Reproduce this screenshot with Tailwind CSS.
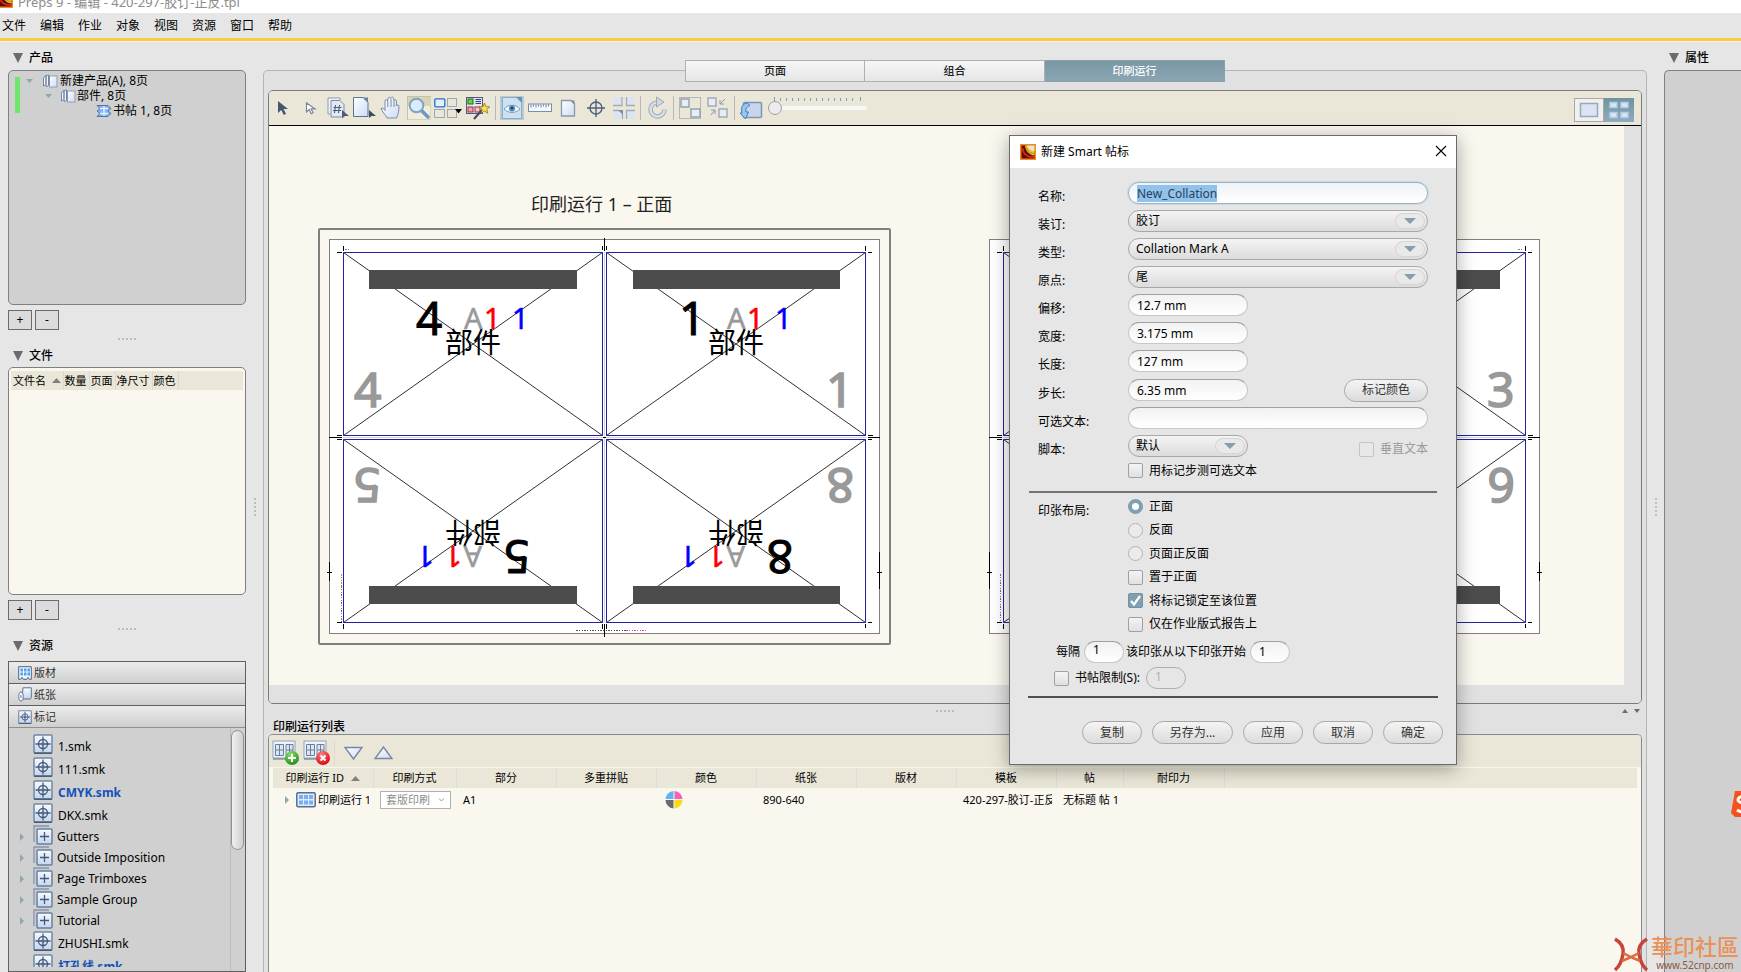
<!DOCTYPE html>
<html lang="zh-CN">
<head>
<meta charset="utf-8">
<title>Preps 9 - 编辑 - 420-297-胶订-正反.tpl</title>
<script src="https://cdn.jsdelivr.net/npm/@tailwindcss/browser@4"></script>
</head>
<body class="h-screen flex flex-col overflow-hidden bg-[#e6e6e6] text-black text-xs leading-4 font-['Noto_Sans','Noto_Sans_CJK_SC',sans-serif]">

<!-- shared gradients and symbols -->
<svg class="absolute w-0 h-0" aria-hidden="true">
  <defs>
    <linearGradient id="blue" x1="0" y1="0" x2="0" y2="1"><stop offset="0" stop-color="#f6faff"/><stop offset="1" stop-color="#c3d6ee"/></linearGradient>
    <linearGradient id="pale" x1="0" y1="0" x2="1" y2="1"><stop offset="0" stop-color="#ffffff"/><stop offset="1" stop-color="#cddcf5"/></linearGradient>
    <radialGradient id="green" cx=".4" cy=".25" r=".8"><stop offset="0" stop-color="#8be06a"/><stop offset="1" stop-color="#1f8a12"/></radialGradient>
    <radialGradient id="red" cx=".4" cy=".25" r=".8"><stop offset="0" stop-color="#ff8080"/><stop offset="1" stop-color="#d4000c"/></radialGradient>
    <symbol id="logo" viewBox="0 0 16 16">
      <rect x=".75" y=".75" width="14.5" height="14.5" fill="#5c0b08" stroke="#f58a1f" stroke-width="1.5"/>
      <path d="M5 1.500h9.500v10C9 11 5.500 7 5 1.500z" fill="#f0c93a"/><path d="M7 1.500h7.500v5.500C11.500 7 8.500 4.500 7 1.500z" fill="#e8e4d8"/>
      <path d="M2.500 4c.5 6 5 9.500 12 9" fill="none" stroke="#d22a14" stroke-width="2"/><path d="M6 3c1 4 4 6.500 8.500 6.500" fill="none" stroke="#c98f14" stroke-width="1.200"/>
    </symbol>
    <symbol id="smk" viewBox="0 0 20 20">
      <rect x="1" y="1" width="18" height="18" rx="1" fill="url(#blue)" stroke="#7286a3" stroke-width="1.500"/>
      <path d="M1 19.200h18" stroke="#4a5a72" stroke-width="1.500"/>
      <g fill="none" stroke="#465a78" stroke-width="1.300"><circle cx="10" cy="10" r="4.500"/><path d="M10 2.500v15M2.500 10h15"/></g><circle cx="10" cy="10" r="1.800" fill="#5a6e8c"/>
    </symbol>
    <symbol id="grp" viewBox="0 0 20 20">
      <path d="M1 17V1h15" fill="none" stroke="#8594ab" stroke-width="1.300"/><path d="M2 17V2h15v2H4v13z" fill="#c4ccd8"/>
      <rect x="4" y="4" width="15" height="15" rx="1" fill="url(#blue)" stroke="#6c7f9b" stroke-width="1.500"/>
      <path d="M11.500 7v9M7 11.500h9" stroke="#465a78" stroke-width="1.300"/>
    </symbol>
    <symbol id="down" viewBox="0 0 10 10"><path d="M0 0h10L5 10z" fill="#6b6b6b"/></symbol>
    <symbol id="grid" viewBox="0 0 20 16">
      <rect x=".75" y=".75" width="18.500" height="14" rx="1.500" fill="#dfeafc" stroke="#56708f" stroke-width="1.500"/>
      <g fill="#79aef5"><path d="M3 3h4v4H3zM8 3h4v4H8zM13 3h4v4h-4zM3 8.500h4v4H3zM8 8.500h4v4H8zM13 8.500h4v4h-4z"/></g>
    </symbol>
    <symbol id="book" viewBox="0 0 15 14">
      <rect x="7" y="2" width="7.500" height="11" fill="url(#pale)" stroke="#8fa0b8"/>
      <path d="M1 12V4l2.500-3v9.500zM3.500 10.500V2L6 .8V11L4 13z" fill="#f2f7ff" stroke="#7388a5"/><path d="M6.500 2v10" stroke="#6c85a8"/>
    </symbol>
    <symbol id="plates" viewBox="0 0 28 26">
      <rect x="1" y="1" width="22" height="17" fill="#eef3fb" stroke="#8fa3b8"/><path d="M1 19h22" stroke="#5b6d84"/>
      <g fill="#dce7f6" stroke="#6b7f99"><path d="M3.500 4.500h8v11h-8zM14 4.500h7v11h-7zM7.500 4.500v11M17.500 4.500v11M3.500 10h8M14 10h7"/></g>
    </symbol>
    <!-- sheet side: four page cells with crop marks -->
    <g id="sheet">
      <rect x="329.500" y="239.500" width="550" height="394" fill="#fff" stroke="#808080"/>
      <path d="M604.500 252v371M343 437.500h523" stroke="#d4d4e8"/>
      <g stroke="#303030" stroke-width="1" fill="none">
        <path d="M343.500 252.500l259 183M602.500 252.500l-259 183M606.500 252.500l259 183M865.500 252.500l-259 183M343.500 439.500l259 183M602.500 439.500l-259 183M606.500 439.500l259 183M865.500 439.500l-259 183"/>
      </g>
      <g fill="none" stroke="#2222a0"><path d="M343.500 252.500h259v183h-259zM606.500 252.500h259v183h-259zM343.500 439.500h259v183h-259zM606.500 439.500h259v183h-259z"/></g>
      <g fill="#4c4c4c"><path d="M369 270h208v19H369zM633 270h207v19H633zM369 586h208v18H369zM633 586h207v18H633z"/></g>
      <g stroke="#000"><path d="M343.500 246v5M337 252.500h5M865.500 246v5M868 252.500h4M604.500 238v13M602.500 246v4M606.500 246v4M329 437.500h13M337 435.500h5M337 439.500h5M868 437.500h12M868 435.500h5M868 439.500h4M343.500 624v5M337 622.500h5M865.500 624v4M868 622.500h4M604.500 624v13M602.500 624v5M606.500 624v5M603 437.500h3"/></g>
    </g>
    <g id="caption">
      <text x="464" y="329" font-size="29" fill="#999" stroke="#999" stroke-width=".5">A</text>
      <text x="484" y="329" font-size="29" fill="#f00" stroke="#f00" stroke-width=".5">1</text>
      <text x="512" y="329" font-size="29" fill="#00f" stroke="#00f" stroke-width=".5">1</text>
      <text x="445" y="353" font-size="28">部件</text>
    </g>
  </defs>
</svg>

<header class="shrink-0">
  <div class="flex h-[13px] overflow-hidden bg-white text-[13px] text-[#8c8c8c]">
    <svg class="-mt-2 w-4 h-4 -ml-[3px]"><use href="#logo"/></svg>
    <span class="ml-[5px] -mt-1.5">Preps 9 - 编辑 - 420-297-胶订-正反.tpl</span>
  </div>
  <nav class="flex h-[25px] items-center gap-3.5 px-0.5">
    <button>文件</button><button>编辑</button><button>作业</button><button>对象</button><button>视图</button><button>资源</button><button>窗口</button><button>帮助</button>
  </nav>
  <div class="h-1 border-b border-[#f4f4f4] bg-[#fccb40]"></div>
</header>

<div class="flex min-h-0 flex-1">

  <!-- left column -->
  <aside class="flex w-[246px] shrink-0 flex-col pl-2">
    <h2 class="flex h-7 items-center gap-1.5 pl-[5px] pt-1 font-medium"><svg class="h-2.5 w-2.5"><use href="#down"/></svg>产品</h2>
    <section class="h-[235px] rounded-[5px] border border-[#808080] bg-[#d0d0d0] p-1.5">
      <div class="flex">
        <div class="h-9 w-[5px] bg-[#6ee86a]"></div>
        <ul class="-mt-1 flex-1 leading-[15px]">
          <li class="flex items-center pl-1.5"><svg class="h-1 w-[7px]" viewBox="0 0 7 4"><path d="M0 0h7L3.500 4z" fill="#8aa9b5"/></svg><svg class="ml-[9px] h-3.5 w-4"><use href="#book"/></svg><span class="ml-0.5">新建产品(A), 8页</span></li>
          <li class="flex items-center pl-[25px]"><svg class="h-1 w-[7px]" viewBox="0 0 7 4"><path d="M0 0h7L3.500 4z" fill="#8aa9b5"/></svg><svg class="ml-2 h-3.5 w-4"><use href="#book"/></svg><span class="ml-px">部件, 8页</span></li>
          <li class="flex items-center pl-[76px]"><svg class="h-3.5 w-4" viewBox="0 0 16 14"><path d="M1 1.500h11l3 3-3 2.500 3 2.500-3 3H1l3-3L1 7l3-2.500z" fill="#7db5f5" stroke="#54749c"/><path d="M4 4.500h8M4 9.500h8M8 2v10" stroke="#eaf4ff" stroke-width="1.300"/></svg><span class="ml-px">书帖 1, 8页</span></li>
        </ul>
      </div>
    </section>
    <div class="mt-[5px] flex gap-[3px]">
      <button class="h-5 w-6 border border-[#6b6b6b] bg-[#dcdcdc] leading-4">+</button><button class="h-5 w-6 border border-[#6b6b6b] bg-[#dcdcdc] leading-4">-</button>
    </div>
    <div class="flex h-[13px] justify-center gap-0.5 pt-2"><i class="h-0.5 w-0.5 bg-[#bdbdbd]"></i><i class="h-0.5 w-0.5 bg-[#bdbdbd]"></i><i class="h-0.5 w-0.5 bg-[#bdbdbd]"></i><i class="h-0.5 w-0.5 bg-[#bdbdbd]"></i><i class="h-0.5 w-0.5 bg-[#bdbdbd]"></i></div>
    <h2 class="flex h-6 items-center gap-1.5 pl-[5px] pt-0.5 font-medium"><svg class="h-2.5 w-2.5"><use href="#down"/></svg>文件</h2>
    <section class="h-[228px] rounded-[5px] border border-[#808080] bg-[#faf7ef] px-0.5 pt-[3px]">
      <table class="w-full table-fixed bg-[#ebe7d8] text-[11px]">
        <colgroup><col class="w-[52px]"><col class="w-[26px]"><col class="w-[26px]"><col class="w-[37px]"><col class="w-[26px]"><col></colgroup>
        <thead><tr class="h-[19px] text-left whitespace-nowrap">
          <th class="border-r border-[#d8d8d8] pl-0.5 font-normal"><span class="flex items-center justify-between pr-0.5">文件名<svg class="h-[5px] w-[9px]" viewBox="0 0 9 5"><path d="M0 5h9L4.500 0z" fill="#808080"/></svg></span></th>
          <th class="border-r border-[#d8d8d8] pl-px font-normal">数量</th><th class="border-r border-[#d8d8d8] pl-px font-normal">页面</th><th class="border-r border-[#d8d8d8] pl-px font-normal">净尺寸</th><th class="border-r border-[#d8d8d8] pl-px font-normal">颜色</th><th></th>
        </tr></thead>
      </table>
    </section>
    <div class="mt-[5px] flex gap-[3px]">
      <button class="h-5 w-6 border border-[#6b6b6b] bg-[#dcdcdc] leading-4">+</button><button class="h-5 w-6 border border-[#6b6b6b] bg-[#dcdcdc] leading-4">-</button>
    </div>
    <div class="flex h-[13px] justify-center gap-0.5 pt-2"><i class="h-0.5 w-0.5 bg-[#bdbdbd]"></i><i class="h-0.5 w-0.5 bg-[#bdbdbd]"></i><i class="h-0.5 w-0.5 bg-[#bdbdbd]"></i><i class="h-0.5 w-0.5 bg-[#bdbdbd]"></i><i class="h-0.5 w-0.5 bg-[#bdbdbd]"></i></div>
    <h2 class="flex h-6 items-center gap-1.5 pl-[5px] pt-0.5 font-medium"><svg class="h-2.5 w-2.5"><use href="#down"/></svg>资源</h2>
    <section class="mt-1 flex min-h-0 flex-1 flex-col border border-[#606060] bg-[#d0d0d0] text-[11px]">
      <button class="flex h-[22px] shrink-0 items-center gap-0.5 border-b border-[#606060] bg-linear-to-b from-[#ececec] to-[#cfcfcf] pl-[9px] text-[#333]"><svg class="h-3.5 w-3.5" viewBox="0 0 14 14"><path d="M.7.7h12.600v12.600h-2l-1.300-2-1.300 2H5.300L4 11.300l-1.300 2h-2z" fill="#eef5ff" stroke="#4a6384"/><path d="M2.500 2.500h2.500v3H2.500zM6 2.500h2.500v3H6zM9.500 2.500H12v3H9.500zM2.500 6.500h2.500v3H2.500zM6 6.500h2.500v3H6zM9.500 6.500H12v3H9.500z" fill="#4fa0f0"/></svg>版材</button>
      <button class="flex h-[22px] shrink-0 items-center gap-0.5 border-b border-[#606060] bg-linear-to-b from-[#ececec] to-[#cfcfcf] pl-[9px] text-[#333]"><svg class="h-[15px] w-3.5" viewBox="0 0 14 15"><path d="M5 .8h8.300v9.500c0 1-.6 1.700-1.300 1.700H4z" fill="url(#blue)" stroke="#5e7390"/><ellipse cx="3" cy="9.500" rx="2.200" ry="4.500" fill="#fff" stroke="#5e7390"/><ellipse cx="3" cy="9.500" rx=".7" ry="1.800" fill="#8094b0"/></svg>纸张</button>
      <button class="flex h-[22px] shrink-0 items-center gap-0.5 border-b border-[#909090] bg-linear-to-b from-[#ececec] to-[#cfcfcf] pl-[9px] text-[#333]"><svg class="h-3.5 w-3.5"><use href="#smk"/></svg>标记</button>
      <div class="flex min-h-0 flex-1 text-xs">
        <ul class="mb-1 flex-1 overflow-hidden pt-1.5">
          <li class="flex h-[23px] items-start pl-6"><svg class="h-5 w-5"><use href="#smk"/></svg><span class="ml-[5px] pt-[5px]">1.smk</span></li>
          <li class="flex h-[23px] items-start pl-6"><svg class="h-5 w-5"><use href="#smk"/></svg><span class="ml-[5px] pt-[5px]">111.smk</span></li>
          <li class="flex h-[23px] items-start pl-6"><svg class="h-5 w-5"><use href="#smk"/></svg><span class="ml-[5px] pt-[5px] font-bold text-[#1450b8]">CMYK.smk</span></li>
          <li class="flex h-[23px] items-start pl-6"><svg class="h-5 w-5"><use href="#smk"/></svg><span class="ml-[5px] pt-[5px]">DKX.smk</span></li>
          <li class="flex h-[21px] items-center pl-[11px]"><svg class="mr-[9px] h-2 w-1" viewBox="0 0 4 8"><path d="M0 0v8l4-4z" fill="#8aa9b5"/></svg><svg class="h-5 w-5 -mt-1"><use href="#grp"/></svg><span class="ml-1">Gutters</span></li>
          <li class="flex h-[21px] items-center pl-[11px]"><svg class="mr-[9px] h-2 w-1" viewBox="0 0 4 8"><path d="M0 0v8l4-4z" fill="#8aa9b5"/></svg><svg class="h-5 w-5 -mt-1"><use href="#grp"/></svg><span class="ml-1">Outside Imposition</span></li>
          <li class="flex h-[21px] items-center pl-[11px]"><svg class="mr-[9px] h-2 w-1" viewBox="0 0 4 8"><path d="M0 0v8l4-4z" fill="#8aa9b5"/></svg><svg class="h-5 w-5 -mt-1"><use href="#grp"/></svg><span class="ml-1">Page Trimboxes</span></li>
          <li class="flex h-[21px] items-center pl-[11px]"><svg class="mr-[9px] h-2 w-1" viewBox="0 0 4 8"><path d="M0 0v8l4-4z" fill="#8aa9b5"/></svg><svg class="h-5 w-5 -mt-1"><use href="#grp"/></svg><span class="ml-1">Sample Group</span></li>
          <li class="flex h-[21px] items-center pl-[11px]"><svg class="mr-[9px] h-2 w-1" viewBox="0 0 4 8"><path d="M0 0v8l4-4z" fill="#8aa9b5"/></svg><svg class="h-5 w-5 -mt-1"><use href="#grp"/></svg><span class="ml-1">Tutorial</span></li>
          <li class="flex h-[23px] items-start pl-6"><svg class="h-5 w-5"><use href="#smk"/></svg><span class="ml-[5px] pt-[5px]">ZHUSHI.smk</span></li>
          <li class="flex h-[23px] items-start pl-6"><svg class="h-5 w-5"><use href="#smk"/></svg><span class="ml-[5px] pt-[5px] font-bold text-[#1450b8]">打孔线.smk</span></li>
        </ul>
        <div class="w-[15px] border-l border-[#bcbcbc] pt-0.5 pr-px"><div class="h-[120px] rounded-full border border-[#909090] bg-linear-to-r from-[#f0f0f0] to-[#d0d0d0]"></div></div>
      </div>
    </section>
  </aside>

  <!-- vertical splitter -->
  <div class="flex w-[17px] shrink-0 flex-col items-center justify-center gap-0.5"><i class="h-0.5 w-0.5 bg-[#bdbdbd]"></i><i class="h-0.5 w-0.5 bg-[#bdbdbd]"></i><i class="h-0.5 w-0.5 bg-[#bdbdbd]"></i><i class="h-0.5 w-0.5 bg-[#bdbdbd]"></i><i class="h-0.5 w-0.5 bg-[#bdbdbd]"></i></div>

  <!-- workspace -->
  <main class="mt-7 flex min-w-0 flex-1 flex-col rounded-t-[5px] border border-b-0 border-[#b5b5b5] bg-[#e1e1e1] px-1">
    <div class="-mt-[11px] flex h-[22px] shrink-0 justify-center text-[11px] font-medium">
      <button class="w-[180px] border border-[#b0b0b0] bg-linear-to-b from-[#f6f6f6] to-[#e6e6e6] text-[#222]">页面</button>
      <button class="w-[180px] border border-l-0 border-[#b0b0b0] bg-linear-to-b from-[#f6f6f6] to-[#e6e6e6] text-[#222]">组合</button>
      <button class="w-[180px] border border-l-0 border-[#8ba0ab] bg-linear-to-b from-[#7897a4] to-[#8ca5b3] text-white">印刷运行</button>
    </div>

    <section class="mt-2 shrink-0 overflow-hidden rounded-[5px] border border-[#7a7a7a]">
      <div class="flex h-[35px] items-center border-b border-black bg-[#ebe7d8]">
        <button class="grid w-7 place-items-center" aria-label="选择"><svg class="h-5 w-5" viewBox="0 0 20 20"><path d="M5 3v12l3.300-3 2.500 5 2.200-1.200-2.500-4.800H15z" fill="#46566e"/></svg></button>
        <button class="grid w-7 place-items-center" aria-label="直接选择"><svg class="h-5 w-5" viewBox="0 0 20 20"><path d="M5.500 5v9l2.700-2.400 2 4.200 1.900-1-2-4H14z" fill="#fff" stroke="#7a879a" stroke-width="1.200"/></svg></button>
        <button class="grid w-[26px] place-items-center" aria-label="页码"><svg class="h-6 w-6" viewBox="0 0 24 24"><path d="M4 18H2V2h12v2" fill="#eef3fb" stroke="#8b9ab0"/><path d="M5 4.500h9l4 4V21H5z" fill="#e2e9f4" stroke="#7c8ca4"/><path d="M9.500 9l-1 8M13.500 9l-1 8M7.500 11.500h8M7 14.500h8" stroke="#4d5f7a" stroke-width="1.100"/><path d="M16 14v8l2.500-2H23z" fill="#4e5c72"/></svg></button>
        <button class="grid w-[26px] place-items-center" aria-label="新建页面"><svg class="h-6 w-6" viewBox="0 0 24 24"><path d="M1.500 1.500H11l5 5V20.500H1.500z" fill="url(#pale)" stroke="#5b7290"/><path d="M11 1.500h5v5z" fill="#6b809b"/><path d="M17 14v8l2.500-2H24z" fill="#3f4d63"/></svg></button>
        <button class="grid w-7 place-items-center" aria-label="手形"><svg class="h-6 w-6" viewBox="0 0 24 24"><path d="M8 22c-1-3-5-6-6-9.500 1.500-1.200 3 .3 4 2V5c.2-1.800 2.400-1.800 2.600 0l.4-2.500c.2-1.700 2.400-1.700 2.600 0L12 2c.4-1.400 2.300-1.300 2.500.3L15 4.500c.4-1.400 2.300-1.200 2.400.3V10c.5-1.500 2.600-1.300 2.600.3 0 4-.8 8.700-2.500 11.700z" fill="url(#pale)" stroke="#7b8ca5"/><path d="M8.800 5v6M12 3v8M15 4.500V11" stroke="#7b8ca5"/></svg></button>
        <button class="grid w-7 place-items-center" aria-label="缩放"><svg class="h-6 w-6" viewBox="0 0 24 24"><path d="M0 0h24v24H0z" fill="#d8d4b8"/><path d="M1 10h22v13H1z" fill="#efedde"/><path d="M0 24V0h24" fill="none" stroke="#b5b090"/><path d="M14.500 14.500L21 21" stroke="#6f98c2" stroke-width="3.500" stroke-linecap="round"/><circle cx="9.500" cy="9.500" r="6.800" fill="#dcecfa" stroke="#7fa3c8" stroke-width="2"/></svg></button>
        <button class="grid w-[30px] place-items-center" aria-label="排列"><svg class="h-6 w-7" viewBox="0 0 28 24"><rect x=".8" y="2.800" width="10" height="8" rx="1" fill="#e3f0ff" stroke="#2a6fc4" stroke-width="1.300"/><g fill="none" stroke="#4d6a92" stroke-dasharray="1 1"><path d="M13.500 2.500h9v8h-9zM.5 13.500h10v8H.5zM13.500 13.500h9v8h-9z"/></g><path d="M21 13h7l-3.500 4.500z"/></svg></button>
        <button class="grid w-[30px] place-items-center" aria-label="标记向导"><svg class="h-6 w-6" viewBox="0 0 24 24"><rect x=".5" y="1.500" width="16" height="16" fill="#e4e6f0" stroke="#4e5a78"/><rect x="2" y="3" width="5" height="5" fill="#5fdc3a" stroke="#1f6a16"/><path d="M9.500 3.500H15M9.500 5.500H15M9.500 7.500H15" stroke="#27407a"/><rect x="2" y="11" width="5" height="5" fill="#f4a0a8" stroke="#9a3240"/><rect x="9" y="11" width="5" height="5" fill="#f4c8cc" stroke="#9a3240"/><path d="M8 23l8-9" stroke="#3e4a60" stroke-width="2"/><path d="M18.500 7l1.400 3.600 3.900.3-3 2.500 1 3.800-3.300-2.100-3.300 2.100 1-3.800-3-2.500 3.900-.3z" fill="#ffe14a" stroke="#8a7020" stroke-width=".8"/></svg></button>
        <i class="mx-0.5 h-6 w-px bg-[#b4b8bc]"></i>
        <button class="grid w-7 place-items-center" aria-label="预览"><svg class="h-6 w-6" viewBox="0 0 24 24"><path d="M0 0h24v24H0z" fill="#b4cad8"/><path d="M2.500 1.500H17l4.500 4.500v16.500h-19z" fill="#cfe0ee" stroke="#8aaec8"/><path d="M16 1h6v6z" fill="#6a94b5"/><path d="M4 13c4-5 12-5 16 0-4 4.500-12 4.500-16 0z" fill="#eef6fc" stroke="#6a9abf"/><circle cx="12" cy="12.500" r="3" fill="#5289b5"/><circle cx="12" cy="12" r="1.200" fill="#1c3e5a"/></svg></button>
        <button class="grid w-7 place-items-center" aria-label="标尺"><svg class="h-6 w-6" viewBox="0 0 24 24"><rect x=".5" y="8" width="23" height="7.500" fill="#f4f8ff" stroke="#7b8ca5"/><path d="M3 8.500v3M5.500 8.500v2M8 8.500v3M10.500 8.500v2M13 8.500v3M15.500 8.500v2M18 8.500v3M20.500 8.500v2" stroke="#6d7f99"/></svg></button>
        <button class="grid w-7 place-items-center" aria-label="页面"><svg class="h-6 w-6" viewBox="0 0 24 24"><path d="M5.500 4.500H15l3.500 3.500v12h-13z" fill="url(#pale)" stroke="#8a98ad" stroke-width="1.300"/><path d="M14.500 4.500h4v4z" fill="#7e8ca2"/></svg></button>
        <button class="grid w-7 place-items-center" aria-label="标记"><svg class="h-6 w-6" viewBox="0 0 24 24" fill="none" stroke="#4f6079" stroke-width="1.400"><circle cx="12" cy="12" r="6"/><path d="M12 3v18M3 12h18"/></svg></button>
        <button class="grid w-7 place-items-center" aria-label="裁切"><svg class="h-6 w-6" viewBox="0 0 24 24"><path d="M2 1h7v7H2zM15 1h7v7h-7zM2 15h4l4 4v4H2zM15 15h7v8h-7z" fill="#d9e4f5"/><path d="M1 9.500h9V1M14.500 1v8.500H23M1 14.500h6M10.500 18v5M14.500 23v-8.500H23" fill="none" stroke="#a0abbc" stroke-width="1.300"/><path d="M6 14h5v5z" fill="#7e8ca2"/></svg></button>
        <i class="mx-0.5 h-6 w-px bg-[#b4b8bc]"></i>
        <button class="grid w-7 place-items-center" aria-label="旋转"><svg class="h-6 w-6" viewBox="0 0 24 24"><path d="M12 6.500a7 7 0 1 0 7.500 7" fill="none" stroke="#9ea9b5" stroke-width="4.500"/><path d="M12 6.500a7 7 0 1 0 7.500 7" fill="none" stroke="#d9e0e6" stroke-width="2.500"/><path d="M11.500 1v10L19 6z" fill="#cdd8e2" stroke="#9ea9b5"/></svg></button>
        <i class="mx-0.5 h-6 w-px bg-[#b4b8bc]"></i>
        <button class="grid w-7 place-items-center" aria-label="编组"><svg class="h-6 w-6" viewBox="0 0 24 24"><path d="M1.500 1.500h21v21h-21z" fill="none" stroke="#7a8798" stroke-dasharray="1 1"/><path d="M3 3h8v8H3zM13 13h9v8h-9z" fill="#e6edf7" stroke="#96a1b0" stroke-width="1.500"/></svg></button>
        <button class="grid w-7 place-items-center" aria-label="取消编组"><svg class="h-6 w-6" viewBox="0 0 24 24"><path d="M2 2h8v8H2zM13 13h8v8h-8z" fill="#e6edf7" stroke="#a2abb8" stroke-width="1.500"/><path d="M14 4v4h4M14 8l5-5M5 14h4v4M9 14l-4 5" fill="none" stroke="#8e98a6"/></svg></button>
        <i class="mx-0.5 h-6 w-px bg-[#b4b8bc]"></i>
        <button class="grid w-7 place-items-center" aria-label="翻转"><svg class="h-6 w-6" viewBox="0 0 24 24"><rect x="4.500" y="6.500" width="18" height="15" rx="1" fill="#c7d6ec" stroke="#7f93b3" stroke-width="1.500"/><path d="M8 7C3 8 1.500 12 3 17H1l5.500 6 3-7H7c-.8-3 0-5 4-6.500z" fill="#9cc4f0" stroke="#3f7fc0"/></svg></button>
        <div class="grid w-[102px] self-start pt-1.5 pl-[3px]">
          <svg class="ml-[5px] h-1 w-[90px]" viewBox="0 0 90 4"><path d="M1.500 0v4M7.500 1v3M13.500 1v3M19.500 1v3M25.500 1v3M31.500 1v3M37.500 1v3M43.500 1v3M49.500 1v3M55.500 1v3M61.500 1v3M67.500 1v3M73.500 1v3M79.500 1v3M87.500 0v4" stroke="#7f9fae"/></svg>
          <input type="range" min="0" max="14" value="0" aria-label="缩放比例" class="h-3.5 w-full appearance-none bg-transparent [&::-webkit-slider-runnable-track]:h-1 [&::-webkit-slider-runnable-track]:rounded-full [&::-webkit-slider-runnable-track]:bg-[#f8f8f4] [&::-webkit-slider-thumb]:-mt-[5px] [&::-webkit-slider-thumb]:h-3.5 [&::-webkit-slider-thumb]:w-3.5 [&::-webkit-slider-thumb]:appearance-none [&::-webkit-slider-thumb]:rounded-full [&::-webkit-slider-thumb]:border [&::-webkit-slider-thumb]:border-[#a0a0a0] [&::-webkit-slider-thumb]:bg-[#ececec]">
        </div>
        <div class="mt-[3px] mr-[7px] ml-auto flex">
          <button class="grid h-6 w-[30px] place-items-center border border-[#a8a8a8] bg-[#f0f0ee]" aria-label="单页视图"><svg class="h-4 w-5" viewBox="0 0 20 16"><rect x="1.500" y="1.500" width="17" height="13" fill="#d9e4f5" stroke="#9aa8bc" stroke-width="1.500"/></svg></button>
          <button class="grid h-6 w-[30px] place-items-center bg-linear-to-b from-[#6f949f] to-[#8eabc0]" aria-label="多页视图"><svg class="h-[18px] w-[22px]" viewBox="0 0 22 18"><path d="M2 1.500h7v5H2zM13 1.500h7v5h-7zM2 11.500h7v5H2zM13 11.500h7v5h-7z" fill="#d9e6fa" stroke="#b5cbe0" stroke-width="1.500"/></svg></button>
        </div>
      </div>
      <div class="bg-[#e1e1e1] pr-[17px] pb-[18px]">
        <div class="overflow-hidden bg-[#faf7ef]">
          <svg class="h-[559px] w-[1355px] max-w-none" viewBox="269 126 1355 559">
            <text x="531" y="211" font-size="18" fill="#222" xml:space="preserve">印刷运行 1 – 正面</text>
            <rect x="319" y="229" width="571" height="415" fill="none" stroke="#808080" stroke-width="2" rx="1"/>
            <use href="#sheet"/>
            <use href="#sheet" x="660"/>
            <g font-size="46">
              <use href="#caption"/><use href="#caption" x="263"/>
              <use href="#caption" transform="rotate(180 473 437.500)"/><use href="#caption" transform="rotate(180 604.500 437.500)"/>
              <g stroke="#000" stroke-width="1">
                <text x="416" y="335">4</text><text x="679" y="335">1</text>
                <text x="416" y="335" transform="rotate(180 473 437.500)">5</text><text x="416" y="335" transform="rotate(180 604.500 437.500)">8</text>
              </g>
              <g fill="#999" font-size="48" stroke="#999" stroke-width="1.600">
                <text x="354" y="407">4</text><text x="826" y="407">1</text>
                <text x="355" y="502" transform="rotate(180 368 485)">5</text><text x="828" y="502" transform="rotate(180 841 485)">8</text>
                <text x="1487" y="407">3</text><text x="1487" y="502" transform="rotate(180 1501 485)">6</text>
              </g>
            </g>
            <g stroke="#000"><path d="M329.500 562v19M327 572.500h5M879.500 552v37M877 572.500h5M989.500 552v37M987 572.500h5M1539.500 562v19M1537 572.500h5"/></g>
            <g stroke-dasharray="2 1 1 2 1 1"><path d="M341.500 574v12" stroke="#c08a30"/><path d="M341.500 586v36M1000.500 574v48" stroke="#777"/><path d="M345 249.500h6M1518 249.500h6" stroke="#39c"/><path d="M576 630.500h50" stroke="#555"/><path d="M626 630.500h22" stroke="#d4c"/></g>
          </svg>
        </div>
      </div>
    </section>

    <!-- horizontal splitter -->
    <div class="flex h-3.5 shrink-0 items-center">
      <div class="flex flex-1 justify-center gap-0.5"><i class="h-0.5 w-0.5 bg-[#bdbdbd]"></i><i class="h-0.5 w-0.5 bg-[#bdbdbd]"></i><i class="h-0.5 w-0.5 bg-[#bdbdbd]"></i><i class="h-0.5 w-0.5 bg-[#bdbdbd]"></i><i class="h-0.5 w-0.5 bg-[#bdbdbd]"></i></div>
      <svg class="h-1 w-5" viewBox="0 0 20 4"><path d="M0 4h6L3 0zM12 0h6l-3 4z" fill="#6b6b6b"/></svg>
    </div>
    <h2 class="shrink-0 pt-0.5 pl-[5px] leading-[14px] font-medium">印刷运行列表</h2>
    <section class="flex min-h-0 flex-1 flex-col overflow-hidden rounded-t-[5px] border border-b-0 border-[#8a8a8a] bg-[#faf7ef]">
      <div class="flex h-8 shrink-0 items-center gap-[3px] bg-[#ebe7d8] pt-1 pl-[3px]">
        <button aria-label="添加印刷运行"><svg class="h-[26px] w-7" viewBox="0 0 28 26"><use href="#plates"/><circle cx="20" cy="18" r="7" fill="url(#green)"/><path d="M20 14v8M16 18h8" stroke="#fff" stroke-width="2"/></svg></button>
        <button aria-label="删除印刷运行"><svg class="h-[26px] w-7" viewBox="0 0 28 26"><use href="#plates"/><circle cx="20" cy="18" r="7" fill="url(#red)"/><path d="M17.500 15.500l5 5M22.500 15.500l-5 5" stroke="#fff" stroke-width="2"/></svg></button>
        <i class="h-6 w-px bg-[#dedac9]"></i>
        <button class="ml-1.5" aria-label="下移"><svg class="h-[15px] w-[19px]" viewBox="0 0 19 15"><path d="M1 1.500h17L9.500 13z" fill="url(#pale)" stroke="#76879f" stroke-width="1.400"/></svg></button>
        <button class="ml-2" aria-label="上移"><svg class="h-[15px] w-[19px]" viewBox="0 0 19 15"><path d="M1 12.500h17L9.500 1z" fill="url(#pale)" stroke="#76879f" stroke-width="1.400"/></svg></button>
      </div>
      <div class="px-1 pt-px">
        <table class="w-full table-fixed text-[11px]">
          <colgroup><col class="w-[100px]"><col class="w-[83px]"><col class="w-[100px]"><col class="w-[100px]"><col class="w-[100px]"><col class="w-[100px]"><col class="w-[100px]"><col class="w-[100px]"><col class="w-[67px]"><col class="w-[101px]"><col></colgroup>
          <thead class="bg-[#ebe7d8]"><tr class="h-5">
            <th class="border-r border-[#dcdcdc] font-normal"><span class="flex items-center justify-center gap-[7px]">印刷运行 ID<svg class="h-[5px] w-[9px]" viewBox="0 0 9 5"><path d="M0 5h9L4.500 0z" fill="#808080"/></svg></span></th>
            <th class="border-r border-[#dcdcdc] font-normal">印刷方式</th><th class="border-r border-[#dcdcdc] font-normal">部分</th><th class="border-r border-[#dcdcdc] font-normal">多重拼贴</th><th class="border-r border-[#dcdcdc] font-normal">颜色</th><th class="border-r border-[#dcdcdc] font-normal">纸张</th><th class="border-r border-[#dcdcdc] font-normal">版材</th><th class="border-r border-[#dcdcdc] font-normal">模板</th><th class="border-r border-[#dcdcdc] font-normal">帖</th><th class="border-r border-[#dcdcdc] font-normal">耐印力</th><th></th>
          </tr></thead>
          <tbody><tr class="h-6 whitespace-nowrap">
            <td><span class="mr-1 flex items-center overflow-hidden pl-3"><svg class="h-2 w-1 shrink-0" viewBox="0 0 4 8"><path d="M0 0v8l4-4z" fill="#8aa9b5"/></svg><svg class="ml-[7px] h-4 w-5 shrink-0"><use href="#grid"/></svg><span class="ml-0.5">印刷运行 1</span></span></td>
            <td class="pl-[7px]"><span class="grid w-[71px]"><select aria-label="印刷方式" disabled class="col-start-1 row-start-1 h-[18px] w-full appearance-none border border-[#b0b0b0] bg-white pl-[5px] text-[#8c8c8c] opacity-100"><option>套版印刷</option></select><svg class="pointer-events-none col-start-1 row-start-1 mr-1.5 h-1 w-[7px] place-self-end self-center" viewBox="0 0 7 4"><path d="M1 .5l2.500 2.500L6 .5" fill="none" stroke="#999"/></svg></span></td>
            <td class="pl-[7px]">A1</td><td></td>
            <td class="pl-[9px]"><svg class="h-[18px] w-[18px]" viewBox="0 0 18 18"><path d="M8.500 8V0A8.500 8.500 0 0 0 .5 8z" fill="#5fb4f2"/><path d="M9.500 8V0a8.500 8.500 0 0 1 8 8z" fill="#f562b4"/><path d="M8.500 9v8.500A8.500 8.500 0 0 1 .5 9z" fill="#6a6a6a"/><path d="M9.500 9v8.500a8.500 8.500 0 0 0 8-8.500z" fill="#f7dc1a"/></svg></td>
            <td class="pl-[7px]">890-640</td><td></td>
            <td class="pl-[7px]"><span class="mr-1 block overflow-hidden">420-297-胶订-正反</span></td><td class="overflow-hidden pl-[7px]">无标题 帖 1</td><td></td><td></td>
          </tr></tbody>
        </table>
      </div>
    </section>
  </main>

  <div class="flex w-[17px] shrink-0 flex-col items-center justify-center gap-0.5"><i class="h-0.5 w-0.5 bg-[#bdbdbd]"></i><i class="h-0.5 w-0.5 bg-[#bdbdbd]"></i><i class="h-0.5 w-0.5 bg-[#bdbdbd]"></i><i class="h-0.5 w-0.5 bg-[#bdbdbd]"></i><i class="h-0.5 w-0.5 bg-[#bdbdbd]"></i></div>

  <!-- properties -->
  <aside class="flex w-[77px] shrink-0 flex-col">
    <h2 class="flex h-7 items-center gap-1.5 pl-[5px] pt-1 font-medium"><svg class="h-2.5 w-2.5"><use href="#down"/></svg>属性</h2>
    <div class="flex-1 rounded-tl-[5px] border-t border-l border-[#808080] bg-[#d0d0d0]"></div>
  </aside>
</div>

<!-- smart mark dialog -->
<form role="dialog" aria-label="新建 Smart 帖标" class="absolute top-[135px] left-[1009px] w-[448px] border border-[#6b6b6b] bg-[#e6e6e6] shadow-[0_4px_18px_rgba(0,0,0,0.35)]">
  <div class="flex h-8 items-center bg-white pr-[9px] pl-2.5">
    <svg class="mr-[5px] h-4 w-4"><use href="#logo"/></svg>新建 Smart 帖标
    <button type="button" class="mb-0.5 ml-auto" aria-label="关闭"><svg class="h-3 w-3" viewBox="0 0 12 12"><path d="M1 1l10 10M11 1L1 11" stroke="#000" stroke-width="1.100"/></svg></button>
  </div>
  <div class="px-[18px] pt-[11px]">
    <div class="grid grid-cols-[90px_120px_1fr] items-center px-2.5 auto-rows-[28px]">
      <label for="f1" class="pt-2">名称:</label>
      <input id="f1" value="New_Collation" autofocus class="col-span-2 h-[22px] rounded-full border border-[#9db4c2] bg-linear-to-b from-[#eef3f8] to-white px-2 caret-transparent ring-1 ring-[#c9d9e4] outline-none selection:bg-[#92c1ea] selection:text-[#23435e]">
      <label for="f2" class="pt-2">装订:</label>
      <div class="col-span-2 grid"><select id="f2" class="col-start-1 row-start-1 h-[22px] w-full appearance-none rounded-full border border-[#a8a8a8] bg-linear-to-b from-[#f4f4f4] to-[#dcdcdc] pl-[7px] outline-none"><option>胶订</option></select><span class="pointer-events-none col-start-1 row-start-1 mr-[3px] grid h-4 w-[30px] place-items-center place-self-end self-center rounded-full border border-[#d4d4d4] bg-[#e9e9e9]"><svg class="h-1.5 w-3" viewBox="0 0 12 6"><path d="M0 0h12L6 6z" fill="#7f9fb5"/></svg></span></div>
      <label for="f3" class="pt-2">类型:</label>
      <div class="col-span-2 grid"><select id="f3" class="col-start-1 row-start-1 h-[22px] w-full appearance-none rounded-full border border-[#a8a8a8] bg-linear-to-b from-[#f4f4f4] to-[#dcdcdc] pl-[7px] outline-none"><option>Collation Mark A</option></select><span class="pointer-events-none col-start-1 row-start-1 mr-[3px] grid h-4 w-[30px] place-items-center place-self-end self-center rounded-full border border-[#d4d4d4] bg-[#e9e9e9]"><svg class="h-1.5 w-3" viewBox="0 0 12 6"><path d="M0 0h12L6 6z" fill="#7f9fb5"/></svg></span></div>
      <label for="f4" class="pt-2">原点:</label>
      <div class="col-span-2 grid"><select id="f4" class="col-start-1 row-start-1 h-[22px] w-full appearance-none rounded-full border border-[#a8a8a8] bg-linear-to-b from-[#f4f4f4] to-[#dcdcdc] pl-[7px] outline-none"><option>尾</option></select><span class="pointer-events-none col-start-1 row-start-1 mr-[3px] grid h-4 w-[30px] place-items-center place-self-end self-center rounded-full border border-[#d4d4d4] bg-[#e9e9e9]"><svg class="h-1.5 w-3" viewBox="0 0 12 6"><path d="M0 0h12L6 6z" fill="#7f9fb5"/></svg></span></div>
      <label for="f5" class="pt-2">偏移:</label>
      <input id="f5" value="12.7 mm" class="h-[22px] w-full rounded-full border border-[#c8c8c8] border-t-[#a0a0a0] bg-linear-to-b from-[#f2f2f2] to-white px-2"><span></span>
      <label for="f6" class="pt-2">宽度:</label>
      <input id="f6" value="3.175 mm" class="h-[22px] w-full rounded-full border border-[#c8c8c8] border-t-[#a0a0a0] bg-linear-to-b from-[#f2f2f2] to-white px-2"><span></span>
      <label for="f7" class="pt-2">长度:</label>
      <input id="f7" value="127 mm" class="h-[22px] w-full rounded-full border border-[#c8c8c8] border-t-[#a0a0a0] bg-linear-to-b from-[#f2f2f2] to-white px-2"><span></span>
    </div>
    <div class="grid grid-cols-[90px_120px_1fr] items-center px-2.5 pt-px auto-rows-[28px]">
      <label for="f8" class="pt-2">步长:</label>
      <input id="f8" value="6.35 mm" class="h-[22px] w-full rounded-full border border-[#c8c8c8] border-t-[#a0a0a0] bg-linear-to-b from-[#f2f2f2] to-white px-2">
      <button type="button" class="h-[23px] w-[84px] justify-self-end rounded-full border border-[#a8a8a8] bg-linear-to-b from-[#f4f4f4] to-[#dcdcdc] text-[#333]">标记颜色</button>
      <label for="f9" class="pt-2">可选文本:</label>
      <input id="f9" class="col-span-2 h-[22px] rounded-full border border-[#c8c8c8] border-t-[#a0a0a0] bg-linear-to-b from-[#f2f2f2] to-white px-2">
      <label for="f10" class="pt-2">脚本:</label>
      <div class="grid"><select id="f10" class="col-start-1 row-start-1 h-[22px] w-full appearance-none rounded-full border border-[#a8a8a8] bg-linear-to-b from-[#f4f4f4] to-[#dcdcdc] pl-[7px] outline-none"><option>默认</option></select><span class="pointer-events-none col-start-1 row-start-1 mr-[3px] grid h-4 w-[30px] place-items-center place-self-end self-center rounded-full border border-[#d4d4d4] bg-[#e9e9e9]"><svg class="h-1.5 w-3" viewBox="0 0 12 6"><path d="M0 0h12L6 6z" fill="#7f9fb5"/></svg></span></div>
      <label class="flex items-center gap-1.5 justify-self-end pt-1.5 text-[#999]"><input type="checkbox" disabled class="h-[15px] w-[15px] appearance-none rounded-xs border border-[#c4c4c4] bg-[#e8e8e8]">垂直文本</label>
    </div>
    <label class="ml-[100px] flex h-[21px] items-center gap-1.5"><input type="checkbox" class="h-[15px] w-[15px] appearance-none rounded-xs border border-[#a0a0a0] bg-linear-to-b from-[#f4f4f4] to-[#e0e0e0]">用标记步测可选文本</label>
    <hr class="mx-px mt-2.5 border-t-2 border-[#747474]">
    <div class="grid grid-cols-[90px_1fr] px-2.5 pt-0.5">
      <span class="pt-2">印张布局:</span>
      <div class="grid h-[141px] grid-rows-6 items-center">
        <label class="flex items-center gap-1.5"><input type="radio" name="side" checked class="h-[15px] w-[15px] appearance-none rounded-full border-4 border-[#819fb2] bg-white">正面</label>
        <label class="flex items-center gap-1.5"><input type="radio" name="side" class="h-[15px] w-[15px] appearance-none rounded-full border border-[#b4b4b4] bg-[#ebebeb]">反面</label>
        <label class="flex items-center gap-1.5"><input type="radio" name="side" class="h-[15px] w-[15px] appearance-none rounded-full border border-[#b4b4b4] bg-[#ebebeb]">页面正反面</label>
        <label class="flex items-center gap-1.5"><input type="checkbox" class="h-[15px] w-[15px] appearance-none rounded-xs border border-[#a0a0a0] bg-linear-to-b from-[#f4f4f4] to-[#e0e0e0]">置于正面</label>
        <label class="flex items-center gap-1.5"><span class="grid"><input type="checkbox" checked class="col-start-1 row-start-1 h-[15px] w-[15px] appearance-none rounded-xs border border-[#7590a4] bg-[#819fb2]"><svg class="pointer-events-none col-start-1 row-start-1 h-[15px] w-[15px]" viewBox="0 0 15 15"><path d="M3 8l3 3.500L12 3" fill="none" stroke="#fff" stroke-width="2.200"/></svg></span>将标记锁定至该位置</label>
        <label class="flex items-center gap-1.5"><input type="checkbox" class="h-[15px] w-[15px] appearance-none rounded-xs border border-[#a0a0a0] bg-linear-to-b from-[#f4f4f4] to-[#e0e0e0]">仅在作业版式报告上</label>
      </div>
    </div>
    <div class="flex h-[31px] items-center pl-7">
      <label for="n1">每隔</label><input id="n1" value="1" class="mr-0.5 ml-1 h-[22px] w-10 rounded-full border border-[#c8c8c8] border-t-[#a0a0a0] bg-linear-to-b from-[#f2f2f2] to-white pb-1 pl-2">
      <label for="n2">该印张从以下印张开始</label><input id="n2" value="1" class="ml-1 h-[22px] w-10 rounded-full border border-[#c8c8c8] border-t-[#a0a0a0] bg-linear-to-b from-[#f2f2f2] to-white pl-2">
    </div>
    <div class="flex h-[22px] items-center pl-[26px]">
      <input id="lim" type="checkbox" class="mr-1.5 h-[15px] w-[15px] appearance-none rounded-xs border border-[#a0a0a0] bg-linear-to-b from-[#f4f4f4] to-[#e0e0e0]"><label for="lim">书帖限制(S):</label>
      <input value="1" aria-label="书帖限制数" disabled class="ml-1.5 h-[22px] w-10 rounded-full border border-[#b0b0b0] bg-[#e6e6e6] pb-1 pl-2 text-[#b0b0b0]">
    </div>
    <hr class="mt-[7px] border-t-2 border-[#505050]">
  </div>
  <div class="flex justify-end gap-2.5 pt-[23px] pr-[13px] pb-5 text-[#333]">
    <button type="button" class="h-[23px] w-[60px] rounded-full border border-[#a8a8a8] bg-linear-to-b from-[#f4f4f4] to-[#dcdcdc]">复制</button>
    <button type="button" class="h-[23px] w-[81px] rounded-full border border-[#a8a8a8] bg-linear-to-b from-[#f4f4f4] to-[#dcdcdc]">另存为...</button>
    <button type="button" class="h-[23px] w-[60px] rounded-full border border-[#a8a8a8] bg-linear-to-b from-[#f4f4f4] to-[#dcdcdc]">应用</button>
    <button type="button" class="h-[23px] w-[60px] rounded-full border border-[#a8a8a8] bg-linear-to-b from-[#f4f4f4] to-[#dcdcdc]">取消</button>
    <button type="button" class="h-[23px] w-[60px] rounded-full border border-[#a8a8a8] bg-linear-to-b from-[#f4f4f4] to-[#dcdcdc]">确定</button>
  </div>
</form>

<!-- input-method badge at the window edge -->
<div class="absolute top-[790px] right-0 h-7 w-[11px] overflow-hidden"><svg class="h-7 w-7" viewBox="0 0 28 28"><path d="M5 1h22v26H5L1 23z" fill="#f4511e"/><path d="M20 8c-4-3-12-2-12 2s12 3 12 8-8 5-13 2" fill="none" stroke="#fff" stroke-width="3"/></svg></div>

<!-- community watermark -->
<div class="absolute right-0.5 bottom-0 flex items-end gap-0.5">
  <svg class="h-9 w-9" viewBox="0 0 36 36" fill="none"><path d="M2 3c7 4 9 9 8 15S7 30 2 34M34 3c-7 4-9 9-8 15s3 12 8 16" stroke="#c8433a" stroke-width="3.500"/><path d="M10 17l8 4 8-4M9 25l9-4 9 4" stroke="#e06a3c" stroke-width="2.500"/></svg>
  <div class="pb-px text-center"><div class="text-[22px] leading-7 font-medium text-[#e8925a] font-['Noto_Sans_CJK_TC',sans-serif]">華印社區</div><div class="text-[10px] leading-3 text-[#8a5a40]">www.52cnp.com</div></div>
</div>
<script>document.getElementById('f1').select();</script>
</body>
</html>
